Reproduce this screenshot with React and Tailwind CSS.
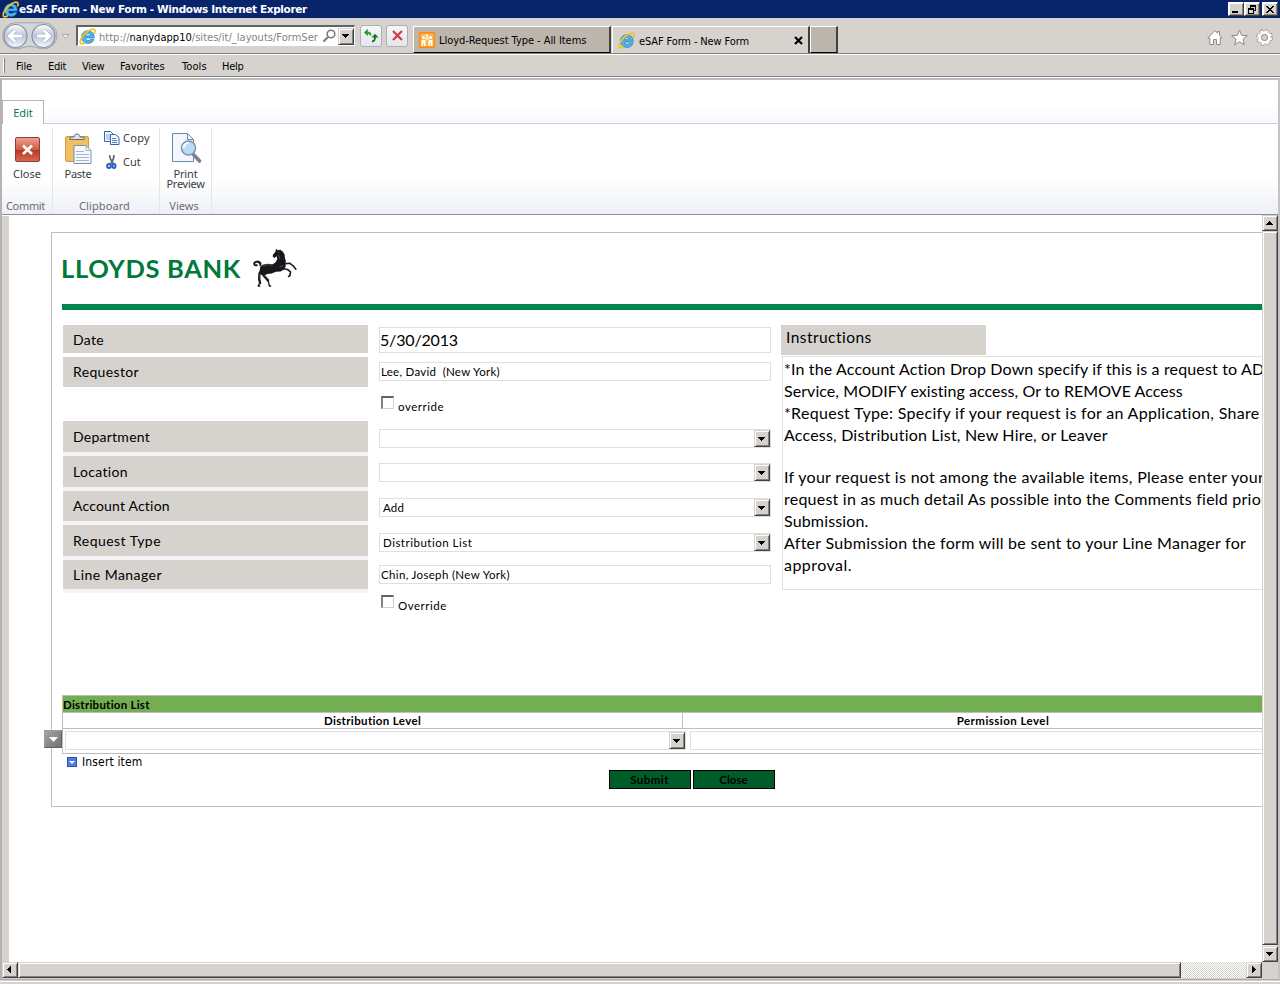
import React from "react";

const UI = "font-['DejaVu_Sans_Condensed','DejaVu_Sans',sans-serif] text-[11px]";

const T = ({ className = "", children }) => (
  <span className={"whitespace-pre [font-variant-ligatures:none] " + className}>{children}</span>
);

const IE = ({ s = 17 }) => (
  <svg width={s} height={s} viewBox="0 0 32 32" className="shrink-0">
    <path d="M17 5C9.500 5 4.500 10.500 4.500 17.500S10 29 17 29c5.500 0 9.500-3 11.200-7.500h-7c-.9 1.300-2.200 2-4 2-3 0-5-1.700-5.200-4.500h16.700C29.300 10.500 24.500 5 17 5zm-5 9.500c.5-2.600 2.400-4 5-4s4.500 1.400 4.900 4z" fill="#4fb3ea" stroke="#1b78bd" strokeWidth="1.200" fillRule="evenodd" />
    <path d="M29.500 9C31 5 30 2.300 26.500 2.300 20.500 2.300 10 9.500 5 18c-3.500 6-4 11.500 0 11.800 1.700.1 3.500-.6 5-1.600" fill="none" stroke="#f6c21c" strokeWidth="3.200" strokeLinecap="round" />
  </svg>
);

const ARROWS = {
  down: "M0 0h7v1H6v1H5v1H4v1H3V3H2V2H1V1H0z",
  up: "M3 0h1v1h1v1h1v1h1v1H0V3h1V2h1V1h1z",
  left: "M3 0h1v7H3V6H2V5H1V4H0V3h1V2h1V1h1z",
  right: "M0 0h1v1h1v1h1v1h1v1H3v1H2v1H1v1H0z",
};

const Arrow = ({ dir = "down" }) => {
  const v = dir === "down" || dir === "up";
  return <svg width={v ? 7 : 4} height={v ? 4 : 7} viewBox={v ? "0 0 7 4" : "0 0 4 7"} shapeRendering="crispEdges"><path d={ARROWS[dir]} /></svg>;
};

const BEVEL = "box-border flex items-center justify-center border border-t-[#d6d3ce] border-l-[#d6d3ce] border-r-[#424142] border-b-[#424142] bg-[#d6d3ce] shadow-[inset_1px_1px_0_#fff,inset_-1px_-1px_0_#848284]";

const Select = ({ value, className = "", text = "" }) => (
  <div className={"flex h-[19px] shrink-0 items-center border border-[#dedfde] bg-white pl-[3px] " + className}>
    <T className={"flex-1 pt-px font-[Lato] text-[11.5px] " + text}>{value}</T>
    <div className={BEVEL + " h-[17px] w-4 pr-px"}><Arrow /></div>
  </div>
);

const Check = ({ label, className }) => (
  <div className={"flex h-[19px] items-start gap-[5px] pl-0.5 " + className}>
    <div className="h-[13px] w-[13px] border-t-2 border-l-2 border-r border-b border-t-[#636163] border-l-[#848284] border-r-[#d6d3ce] border-b-[#d6d3ce] bg-white" />
    <T className="-ml-px mt-[3px] font-[Lato] text-[11.5px] leading-[15px] tracking-[0.52px]">{label}</T>
  </div>
);

const LABELS = [
  ["Date", "h-7 mb-1 pt-0.5", "tracking-[0.3px]"],
  ["Requestor", "h-[30px] mb-[34px]", "tracking-[0.35px]"],
  ["Department", "h-[31px] border-b-4 box-content", "tracking-[0.25px]"],
  ["Location", "h-[31px] border-b-4 box-content", "tracking-[0.31px]"],
  ["Account Action", "h-[30px] border-b-4 box-content", "tracking-[0.19px]"],
  ["Request Type", "h-[31px] border-b-4 box-content", "tracking-[0.46px]"],
  ["Line Manager", "h-[29px] border-b-4 box-content", "tracking-[0.46px]"],
];

const LINES = [
  ["*In the Account Action Drop Down specify if this is a request to ADD", "tracking-[0.15px]"],
  ["Service, MODIFY existing access, Or to REMOVE Access", "tracking-[0.06px]"],
  ["*Request Type: Specify if your request is for an Application, Share", "tracking-[0.3px]"],
  ["Access, Distribution List, New Hire, or Leaver", "tracking-[0.19px]"],
  ["", ""],
  ["If your request is not among the available items, Please enter your", "tracking-[0.31px]"],
  ["request in as much detail As possible into the Comments field prior", "tracking-[0.23px]"],
  ["Submission.", "tracking-[0.15px]"],
  ["After Submission the form will be sent to your Line Manager for", "tracking-[0.28px]"],
  ["approval.", "tracking-[0.46px]"],
];

const WinBtn = ({ children, className = "" }) => (
  <div className={BEVEL + " h-3.5 w-4 border-t-white border-l-white " + className}>
    <svg width="10" height="9" viewBox="0 0 10 9" shapeRendering="crispEdges" fill="none" stroke="#000">{children}</svg>
  </div>
);

const Horse = () => (
  <svg width="46" height="41" viewBox="636 66 138 124" className="shrink-0">
    <g fill="none" stroke="#1b1d20" strokeLinecap="round" strokeLinejoin="round">
      <path d="M661 122c0-8-5-11-11-11-5 0-8 3-8 6s4 5 8 4M646 112c5-3 11-2 15 3" strokeWidth="6" />
      <path d="M667 133l-9 13-1 17 3 12M668 136l3 17 13 14" strokeWidth="7" />
      <path d="M659 174l-5 10h5M684 167l4 17h4M657 160l3 16M678 161l7 10" strokeWidth="4" />
      <path d="M732 117l17-2 11 8 8 10" strokeWidth="5" />
      <path d="M728 131l15 3 9 7-2 12-4 2" strokeWidth="5" />
    </g>
    <path d="M709 71l4 5 8-2 8 6 5 9 1 10 3 9-2 10 2 6-7 11-9 5-14 1-13 5-14 2-8 5-11-3-4-10 2-12 7-8 14-3 17 1 9-6 5-10-2-8-7 5-5-4 1-6 7-8 1-5z" fill="#15171a" />
    <path d="M668 123c10-4 20-3 30-2M714 90c4 3 6 7 5 13M719 126l10-3M715 81l4 4M659 150l1 10M673 150l6 7" fill="none" stroke="#6d7277" strokeWidth="2" />
  </svg>
);

export default function App() {
  return (
    <div className="flex h-[984px] w-[1280px] flex-col overflow-hidden bg-[#d6d3ce] font-['Noto_Sans',sans-serif] text-black">
      <div className="flex h-[18px] shrink-0 items-center bg-[#08246b] pl-0.5">
        <IE s={17} />
        <T className="flex-1 font-['DejaVu_Sans'] text-[10.5px] leading-4 font-bold tracking-[-0.36px] text-white">eSAF Form - New Form - Windows Internet Explorer</T>
        <WinBtn><path d="M1 7.500h6M1 6.500h6" /></WinBtn>
        <WinBtn><path d="M3 .5h6M3 1.500h6M3.500 0v3M8.500 1v5M7 5.500h2M1 3.500h6M1 4.500h6M1.500 4v5M6.500 4v5M1 8.500h6" /></WinBtn>
        <WinBtn className="mr-0.5 ml-0.5"><path d="M1 1l7 7M2 1l7 7M8 1l-7 7M9 1l-7 7" shapeRendering="auto" /></WinBtn>
      </div>

      <div className="flex h-[35px] shrink-0 items-center">
        <svg width="76" height="34" viewBox="0 0 76 34">
          <defs><linearGradient id="orb" x2="0" y2="1"><stop offset="0" stopColor="#fbfcfe" /><stop offset=".5" stopColor="#bcc6d6" /><stop offset="1" stopColor="#f6f9fd" /></linearGradient></defs>
          <path d="M15 3.800h29a13 13 0 010 26c-6 0-9-2.500-14-2.500s-8 2.500-14 2.500a13 13 0 01-1-26z" fill="#d4d6da" stroke="#a5a5a8" />
          <circle cx="15.500" cy="17" r="11.500" fill="url(#orb)" stroke="#848fa6" strokeWidth="1.200" />
          <circle cx="43.500" cy="17" r="11.500" fill="url(#orb)" stroke="#848fa6" strokeWidth="1.200" />
          <path d="M22.500 17H10m5-5.500L9.500 17l5.500 5.500M36.500 17H49m-5-5.500l5.500 5.500-5.500 5.500" fill="none" stroke="#a3afc4" strokeWidth="4.200" />
          <path d="M22 17H10m5-5.500L9.500 17l5.500 5.500M37 17h12m-5-5.500l5.500 5.500-5.500 5.500" fill="none" stroke="#fff" strokeWidth="3" />
          <path d="M62 15.500h7l-3.500 4z" fill="#eee" stroke="#aaa" />
        </svg>
        <div className="flex h-[21px] w-[279px] items-center border-t-2 border-r border-b border-l-2 border-t-[#636163] border-r-white border-b-white border-l-[#636163] bg-white pl-px">
          <IE s={17} />
          <T className={UI + " ml-[3px] flex-1 overflow-hidden pt-1 tracking-[0.03px] text-[#848284]"}>http://<span className="text-black">nanydapp10</span>/sites/it/_layouts/FormSer</T>
          <svg width="15" height="14" viewBox="0 0 15 14" fill="none" stroke="#7b797b" strokeWidth="1.600" className="mr-px"><circle cx="9" cy="5" r="3.800" /><path d="M6 8l-4.500 4.500" strokeWidth="2.200" /></svg>
          <div className={BEVEL + " h-[17px] w-4 pr-px"}><Arrow /></div>
        </div>
        <div className="ml-[5px] flex h-[22px] w-[22px] items-center justify-center rounded-[3px] border border-[#adaeb5] bg-linear-to-b from-[#f6f7fb] to-[#e4e6ee]">
          <svg width="16" height="15" viewBox="0 0 16 15" fill="none" strokeWidth="1.900"><path d="M7.500 7.500C7.500 5 6.500 4.500 4 4.500" stroke="#3a9a30" /><path d="M4.800.8v7.400L1 4.500z" fill="#2a9a26" /><path d="M9 13.500c2.500 0 3-1.500 3-4.500" stroke="#157a15" /><path d="M8.500 9.500h7L12 5.800z" fill="#157a15" /></svg>
        </div>
        <div className="ml-1 flex h-[22px] w-[22px] items-center justify-center rounded-[3px] border border-[#adaeb5] bg-linear-to-b from-[#f6f7fb] to-[#e4e6ee]">
          <svg width="13" height="13" viewBox="0 0 13 13"><path d="M2 2l9 9M11 2l-9 9" stroke="#ce3c41" strokeWidth="2.200" /></svg>
        </div>
        <div className="ml-[5px] flex h-[27px] w-[198px] items-center self-end border-t border-r-2 border-b border-l border-t-white border-r-[#424142] border-b-black border-l-white bg-[#bdb6ad] pl-[5px]">
          <svg width="16" height="16" viewBox="0 0 16 16"><rect width="16" height="16" rx="1" fill="#ff8a10" /><rect x="1.500" y="1.500" width="13" height="13" fill="#ffb54a" /><g fill="#fff"><circle cx="4.500" cy="5.500" r="1.500" /><circle cx="11.500" cy="5.500" r="1.500" /><circle cx="8" cy="3.500" r="1.300" /><path d="M2.500 8h4v6H5v-3h-.8v3H2.500zM9.500 8h4v6h-1.700v-3H11v3H9.500zM6.500 5.500h3v2h-3z" /></g></svg>
          <T className={UI + " ml-1 pt-1 tracking-[-0.05px]"}>Lloyd-Request Type - All Items</T>
        </div>
        <div className="ml-px flex h-[27px] w-[198px] items-center self-end border-t border-r-2 border-l border-t-white border-r-[#424142] border-l-white pl-[5px]">
          <IE s={17} />
          <T className={UI + " ml-1 flex-1 pt-[5px] tracking-[-0.13px]"}>eSAF Form - New Form</T>
          <svg width="9" height="9" viewBox="0 0 9 9" className="mr-[5px]"><path d="M1 1l7 7M8 1l-7 7" stroke="#000" strokeWidth="2.200" /></svg>
        </div>
        <div className="h-[27px] w-7 self-end border-t border-r-2 border-b border-l border-t-white border-r-[#424142] border-b-black border-l-white bg-[#bdb6ad]" />
        <div className="flex flex-1 items-center justify-end gap-[8px] pt-[3px] pr-[7px]">
          <svg width="16" height="17" viewBox="0 0 16 17" fill="#fff" stroke="#8c8a8c"><path d="M8 1.500L.8 9h2v6.500h3.700v-5h3v5h3.700V9h2L12.500 6V2.500h-2v1.700z" /></svg>
          <svg width="17" height="17" viewBox="0 0 17 17" fill="#fff" stroke="#8c8a8c"><path d="M8.500 1l2.100 5.300 5.700.4-4.400 3.600 1.500 5.500-4.900-3.100-4.900 3.100 1.500-5.500L.7 6.700l5.700-.4z" /></svg>
          <svg width="17" height="17" viewBox="0 0 17 17"><g fill="none" stroke="#8c8a8c"><circle cx="8.500" cy="8.500" r="6.300" strokeWidth="4" strokeDasharray="2.950 2" /></g><g fill="none" stroke="#fff"><circle cx="8.500" cy="8.500" r="6.300" strokeWidth="2.400" strokeDasharray="2.450 2.500" strokeDashoffset="-.25" /><circle cx="8.500" cy="8.500" r="4.700" strokeWidth="2.500" /></g><circle cx="8.500" cy="8.500" r="3" fill="#d6d3ce" stroke="#8c8a8c" /></svg>
        </div>
      </div>

      <div className={UI + " flex h-[24px] shrink-0 items-center border-t border-b border-t-[#848284] border-b-[#848284] pt-px shadow-[inset_0_1px_0_#fff]"}>
        <div className="mr-[11px] ml-[3px] h-[15px] w-0.5 border-r border-l border-r-[#848284] border-l-white" />
        <div className="w-8 pt-1"><T className="tracking-[-0.1px]">File</T></div>
        <div className="w-[34px] pt-1"><T className="tracking-[-0.29px]">Edit</T></div>
        <div className="w-[38px] pt-1"><T className="tracking-[-0.3px]">View</T></div>
        <div className="w-[62px] pt-1"><T>Favorites</T></div>
        <div className="w-10 pt-1"><T className="tracking-[0.1px]">Tools</T></div>
        <div className="pt-1"><T className="tracking-[-0.3px]">Help</T></div>
      </div>
      <div className="h-px shrink-0 bg-white" />

      <div className="flex h-[902px] shrink-0 flex-col border-t-2 border-r-2 border-b border-l-2 border-t-[#bdbabd] border-r-[#c6c3c6] border-b-[#adaaad] border-l-[#b5b2b5]">
        <div className="flex h-[135px] shrink-0 flex-col border-b border-[#8c8e94] bg-white">
          <div className="flex h-[44px] items-end">
            <div className="z-10 flex h-[24px] w-[42px] items-center justify-center border border-b-0 border-[#b5b6bd] bg-white pt-0.5"><T className="text-[11px] text-[#10794a]">Edit</T></div>
            <div className="h-[20px] flex-1 border-b border-[#c9cfda] bg-linear-to-b from-white to-[#f8f9fd]" />
          </div>
          <div className="flex flex-1 bg-linear-to-b from-white from-60% to-[#edf0f5] pt-1 text-[11px] text-[#393c42]">
            <div className="flex w-[51px] flex-col items-center border-r border-[#e3e5ea]">
              <svg width="25" height="25" viewBox="0 0 25 25" className="mt-[9px]"><defs><linearGradient id="cl" x2="0" y2="1"><stop stopColor="#eda294" /><stop offset=".5" stopColor="#cf5a45" /><stop offset=".5" stopColor="#b8341d" /><stop offset="1" stopColor="#d96a54" /></linearGradient></defs><rect x=".5" y=".5" width="24" height="24" rx="1.500" fill="url(#cl)" stroke="#8f3f33" /><path d="M8 8.500l9 8.500M17 8.500L8 17" stroke="#fff" strokeWidth="2.600" /></svg>
              <T className="mt-1 leading-[15px]">Close</T>
              <T className="mt-auto pr-[3px] text-[#6b6d73] tracking-[-0.33px]">Commit</T>
            </div>
            <div className="flex w-[107px] flex-col border-r border-[#e3e5ea]">
              <div className="flex h-14">
                <div className="flex w-[50px] flex-col items-center">
                  <svg width="27" height="31" viewBox="0 0 27 31" className="mt-[5px]"><rect x=".5" y="3.500" width="23" height="25" rx="1.500" fill="#efbf62" stroke="#d09c46" /><path d="M5 6.500V4h4c0-4 6-4 6 0h4v2.500z" fill="#dfe3e8" stroke="#666d75" /><path d="M9 12.500h12l5 5v13H9z" fill="#f5f8fd" stroke="#7d8fae" /><path d="M21 12.500v5h5M11 18.500h8M11 21.500h13M11 24.500h13M11 27.500h13" fill="none" stroke="#a3b5d2" /></svg>
                  <T className="mt-[2px] leading-[15px] tracking-[-0.26px]">Paste</T>
                </div>
                <div className="flex flex-col pl-px">
                  <div className="flex h-5 items-center gap-[3px]">
                    <svg width="16" height="14" viewBox="0 0 16 14" fill="#f3f7ff" stroke="#3564b0"><path d="M.5.500h6l3 3v7h-9z" /><path d="M2 4h4M2 6h4M2 8h4" stroke="#87a6d8" /><path d="M6.500 3.500h5l3.500 3v7H6.500z" /><path d="M8 7.500h4M8 9.500h5M8 11.500h5" stroke="#5680c4" /></svg>
                    <T className="tracking-[0.3px]">Copy</T>
                  </div>
                  <div className="mt-1 flex h-5 items-center gap-[3px]">
                    <svg width="16" height="14" viewBox="0 0 16 14" fill="none"><path d="M5.500 0c0 4 2 6 4 9M10 0c0 4-1 6-3.500 9" stroke="#5b6470" strokeWidth="1.600" /><ellipse cx="5" cy="11" rx="1.900" ry="2" stroke="#2e5fc0" strokeWidth="2" /><ellipse cx="10" cy="11" rx="1.500" ry="1.900" stroke="#2e5fc0" strokeWidth="2" /></svg>
                    <T>Cut</T>
                  </div>
                </div>
              </div>
              <T className="mt-auto pr-[3px] text-center tracking-[0.1px] text-[#6b6d73]">Clipboard</T>
            </div>
            <div className="flex w-[52px] flex-col items-center border-r border-[#e3e5ea]">
              <svg width="30" height="31" viewBox="0 0 30 31" className="mt-[5px] ml-0.5"><path d="M.5.500h15l6 6v22H.5z" fill="#f3f7fd" stroke="#6f87ab" /><path d="M15.500.500v6h6" fill="none" stroke="#6f87ab" /><path d="M21 21l6.500 7" stroke="#7d828a" strokeWidth="3.600" strokeLinecap="round" /><circle cx="16.500" cy="15" r="7" fill="#b9dcf7" stroke="#8796aa" strokeWidth="1.600" /><path d="M11.500 15a5 5 0 015-5" fill="none" stroke="#fff" strokeWidth="2" /></svg>
              <T className="mt-[4px] leading-[11px] tracking-[-0.16px]">Print</T>
              <T className="leading-[10px] tracking-[-0.29px]">Preview</T>
              <T className="mt-auto pr-[3px] text-[#6b6d73]">Views</T>
            </div>
          </div>
        </div>

        <div className="flex h-[747px] shrink-0">
          <div className="w-[7px] border-t border-white bg-[#d6d3ce]" />
          <div className="flex w-[1253px] flex-col overflow-hidden bg-white pt-[17px] pl-[42px]">
            <div className="flex h-[575px] w-[1400px] shrink-0 flex-col border border-[#bdbebd] pl-[10px]">
              <div className="flex h-[71px] shrink-0 items-start pt-[14px]">
                <T className="-ml-px w-[191px] pt-1.5 font-[Lato] text-[25.5px] leading-[30px] font-bold tracking-[0.65px] text-[#00793a]">LLOYDS BANK</T>
                <Horse />
              </div>
              <div className="h-1.5 shrink-0 bg-[#00864a]" />
              <div className="flex h-[385px] shrink-0 pt-[15px] pl-px">
                <div className="flex w-[305px] flex-col">
                  {LABELS.map(([t, c, tr]) => (
                    <div key={t} className={"flex shrink-0 items-center border-[#f7f3f7] bg-[#d6d3ce] bg-clip-padding pl-[10px] " + c}><T className={"-mt-px font-[Lato] text-[14px] " + tr}>{t}</T></div>
                  ))}
                </div>
                <div className="ml-[11px] flex w-[392px] flex-col pt-0.5">
                  <div className="flex h-[26px] items-center border border-[#dedfde]"><T className="-mt-px font-[Lato] text-[16px] tracking-[-0.16px]">5/30/2013</T></div>
                  <div className="mt-[9px] flex h-[19px] items-center border border-[#dedfde] pl-px"><T className="pt-px font-[Lato] text-[11.5px] tracking-[0.27px]">Lee, David  (New York)</T></div>
                  <Check label="override" className="mt-[15px]" />
                  <Select value="" className="mt-[14px]" />
                  <Select value="" className="mt-[15px]" />
                  <Select value="Add" className="mt-4" text="tracking-[0.2px]" />
                  <Select value="Distribution List" className="mt-4" text="tracking-[0.5px]" />
                  <div className="mt-[13px] flex h-[19px] items-center border border-[#dedfde] pl-px"><T className="pt-px font-[Lato] text-[11.5px] tracking-[0.34px]">Chin, Joseph (New York)</T></div>
                  <Check label="Override" className="mt-[11px]" />
                </div>
                <div className="ml-[10px] flex w-[600px] flex-col">
                  <div className="flex h-[30px] w-[205px] bg-[#d6d3ce] pl-[5px]"><T className="pt-0.5 font-[Lato] text-[15.5px] leading-[20px] tracking-[0.45px]">Instructions</T></div>
                  <div className="mt-px ml-px flex h-[234px] flex-col border border-[#dedfde] pl-px">
                    {LINES.map(([t, tr], i) => (
                      <div key={i} className={t ? "h-[22px]" : "h-[20px]"}><T className={"font-[Lato] text-[16px] leading-[22px] " + tr}>{t}</T></div>
                    ))}
                  </div>
                </div>
              </div>
              <div className="h-[59px] shrink-0 border border-[#bdbebd] font-[Lato] text-[11.5px]">
                <div className="flex h-[17px] items-center border-b border-[#bdbebd] bg-[#73ae52]"><T className="pt-0.5 font-bold tracking-[0.25px]">Distribution List</T></div>
                <div className="flex h-4 border-b border-[#bdbebd]">
                  <div className="flex w-[620px] justify-center border-r border-[#bdbebd]"><T className="leading-[16px] font-bold tracking-[0.36px]">Distribution Level</T></div>
                  <div className="flex w-[640px] justify-center"><T className="leading-[16px] font-bold tracking-[0.45px]">Permission Level</T></div>
                </div>
                <div className="relative flex pt-0.5 pl-0.5">
                  <div className="absolute top-px -left-[19px] flex h-[18px] w-[18px] items-center justify-center border border-t-[#9c9a9c] border-r-[#636163] border-b-[#636163] border-l-[#9c9a9c] bg-linear-to-br from-[#a5a6a5] to-[#737173]"><svg width="9" height="5" viewBox="0 0 9 5"><path d="M0 0h9L4.500 5z" fill="#fff" /></svg></div>
                  <Select value="" className="w-[621px]" />
                  <div className="ml-1 h-[19px] flex-1 border border-[#dedfde]" />
                </div>
              </div>
              <div className="flex h-4 items-center gap-[5px] pl-[5px]">
                <svg width="10" height="10" viewBox="0 0 10 10"><rect x=".5" y=".5" width="9" height="9" fill="#4f7fe0" stroke="#2850a8" /><path d="M2 4h6L5 7z" fill="#fff" /></svg>
                <T className="font-['DejaVu_Sans_Condensed','DejaVu_Sans',sans-serif] text-[12px] tracking-[0.15px]">Insert item</T>
              </div>
              <div className="flex gap-0.5 pl-[547px] font-[Lato] text-[11.5px] font-bold">
                <div className="flex h-[19px] w-[82px] items-center justify-center border border-black bg-[#005d29]"><T className="pr-px tracking-[0.45px]">Submit</T></div>
                <div className="flex h-[19px] w-[82px] items-center justify-center border border-black bg-[#005d29]"><T className="pr-px">Close</T></div>
              </div>
            </div>
          </div>
          <div className="flex w-4 flex-col">
            <div className={BEVEL + " h-4 w-4 pr-px"}><Arrow dir="up" /></div>
            <div className={BEVEL + " h-[714px] w-4"} />
            <div className="h-px bg-[#efefef]" />
            <div className={BEVEL + " h-4 w-4 pr-px"}><Arrow /></div>
          </div>
        </div>
        <div className="flex h-4 shrink-0">
          <div className={BEVEL + " h-4 w-4 pr-0.5 pb-px"}><Arrow dir="left" /></div>
          <div className={BEVEL + " h-4 w-[1163px]"} />
          <div className="h-4 flex-1 bg-white bg-[repeating-conic-gradient(#d6d3ce_0_25%,#fff_0_50%)] bg-[length:2px_2px]" />
          <div className={BEVEL + " h-4 w-4 pb-px"}><Arrow dir="right" /></div>
          <div className="w-4" />
        </div>
      </div>
      <div className="mt-px h-px shrink-0 bg-white" />
    </div>
  );
}
